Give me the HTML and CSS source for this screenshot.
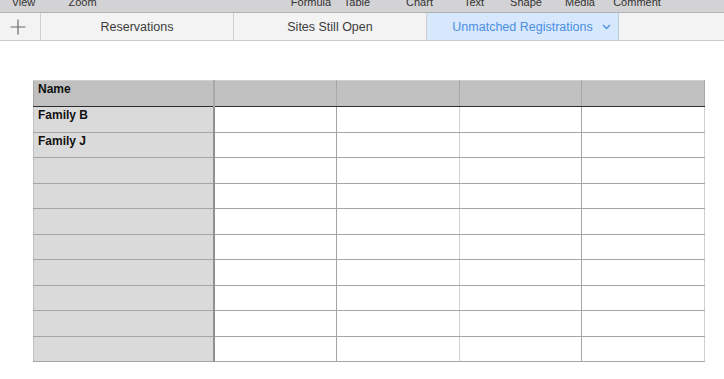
FILE: index.html
```html
<!DOCTYPE html>
<html lang="en">

<head>
    <meta charset="utf-8" />
    <title>Registrations</title>
    <link rel="stylesheet" href="styles.css">
</head>

<body>
    <div class="menubar">
        <span class="mi w47">View</span>
        <span class="mi w71">Zoom</span>
        <span class="mi gap"></span>
        <span class="mi w58">Formula</span>
        <span class="mi w34">Table</span>
        <span class="mi w91">Chart</span>
        <span class="mi w18">Text</span>
        <span class="mi w86">Shape</span>
        <span class="mi w22">Media</span>
        <span class="mi w92">Comment</span>
    </div>
    <div class="tabbar">
        <div class="addtab">
            <svg width="16" height="16" viewBox="0 0 16 16">
                <path d="M8 0.5v15M0.5 8h15" stroke="#6b6b6b" stroke-width="1.2" fill="none" />
            </svg>
        </div>
        <div class="tab">Reservations</div>
        <div class="tab">Sites Still Open</div>
        <div class="tab active">Unmatched Registrations
            <svg class="chev" width="9" height="6" viewBox="0 0 9 6">
                <path d="M1 1l3.5 3.5L8 1" stroke="#4a90e2" stroke-width="1.3" fill="none" />
            </svg>
        </div>
        <div class="tabrest"></div>
    </div>

    <table class="sheet">
        <colgroup>
            <col class="c-name">
            <col class="c-data">
            <col class="c-data">
            <col class="c-data">
            <col class="c-data">
        </colgroup>
        <tr class="head">
            <td>Name</td><td></td><td></td><td></td><td></td>
        </tr>
        <tr class="dark"><td>Family B</td><td></td><td class="lt"></td><td></td><td class="lt"></td></tr>
        <tr><td>Family J</td><td></td><td class="lt"></td><td></td><td class="lt"></td></tr>
        <tr class="dark"><td></td><td></td><td class="lt"></td><td></td><td class="lt"></td></tr>
        <tr><td></td><td></td><td class="lt"></td><td></td><td class="lt"></td></tr>
        <tr class="dark"><td></td><td></td><td class="lt"></td><td></td><td class="lt"></td></tr>
        <tr><td></td><td></td><td class="lt"></td><td></td><td class="lt"></td></tr>
        <tr class="dark"><td></td><td></td><td class="lt"></td><td></td><td class="lt"></td></tr>
        <tr class="dark"><td></td><td></td><td class="lt"></td><td></td><td class="lt"></td></tr>
        <tr><td></td><td></td><td class="lt"></td><td></td><td class="lt"></td></tr>
        <tr class="dark"><td></td><td></td><td class="lt"></td><td></td><td class="lt"></td></tr>
    </table>
</body>

</html>
```

FILE: styles.css
```css
body {
    margin: 0;
    background: #fff;
    font-family: "Liberation Sans", Arial, sans-serif;
}

/* top toolbar, only the label row shows */
.menubar {
    display: flex;
    height: 12px;
    overflow: hidden;
    background: #d3d2d4;
    border-bottom: 1px solid #b3b3b3;
    font-size: 11px;
    color: #333;
}

.mi {
    display: flex;
    justify-content: center;
    flex: none;
    line-height: 12px;
    margin-top: -4px;
    white-space: nowrap;
}

.w47 { width: 47px; }
.w71 { width: 71px; }
.gap { width: 164px; }
.w58 { width: 58px; }
.w34 { width: 34px; }
.w91 { width: 91px; }
.w18 { width: 18px; }
.w86 { width: 86px; }
.w22 { width: 22px; }
.w92 { width: 92px; }

.tabbar {
    display: flex;
    height: 27px;
    background: #f3f3f3;
    border-bottom: 1px solid #cbcbcb;
}

.addtab {
    width: 41px;
    display: flex;
    align-items: center;
    justify-content: center;
    border-right: 1px solid #cfcfcf;
    padding-right: 5px;
    box-sizing: border-box;
}

.tab {
    width: 192px;
    display: flex;
    align-items: center;
    justify-content: center;
    border-right: 1px solid #cfcfcf;
    font-size: 12.5px;
    color: #3c3c3c;
}

.tab.active {
    background: #d7e7fc;
    border-right: 1px solid #b7c8df;
    color: #4a8fe2;
    padding-left: 18px;
    box-sizing: border-box;
}

.chev {
    margin-left: 9px;
    margin-top: 1px;
}

.tabrest {
    flex: 1;
}

table.sheet {
    margin: 39px 0 0 33px;
    width: 671px;
    table-layout: fixed;
    border-collapse: collapse;
    border-spacing: 0;
    font-size: 12px;
    font-weight: bold;
    color: #111;
}

.c-name { width: 180px; }
.c-data { width: 122.75px; }

table.sheet td {
    height: 23.5px;
    padding: 1px 4px 0;
    vertical-align: top;
    line-height: 15px;
    border: 1px solid #a5a5a5;
    border-top-color: #d2d2d2;
    background: #fff;
}

table.sheet tr.dark td {
    border-top-color: #a0a0a0;
}

table.sheet td.lt {
    border-left-color: #d0d0d0;
    border-right-color: #d0d0d0;
}

table.sheet td:first-child {
    background: #dadada;
    border-right: 2px solid #909090;
    border-left-color: #c0c0c0;
}

table.sheet tr.head td {
    height: 24px;
    background: #bfc0bf;
    border-top-color: #d0d0d0;
    border-bottom: 1px solid #2e2e2e;
    border-left-color: #a8a8a8;
    border-right-color: #a8a8a8;
}

table.sheet tr.head td:first-child {
    border-right: 2px solid #a8a8a8;
}

table.sheet tr:last-child td {
    border-bottom-color: #a5a5a5;
}
```
